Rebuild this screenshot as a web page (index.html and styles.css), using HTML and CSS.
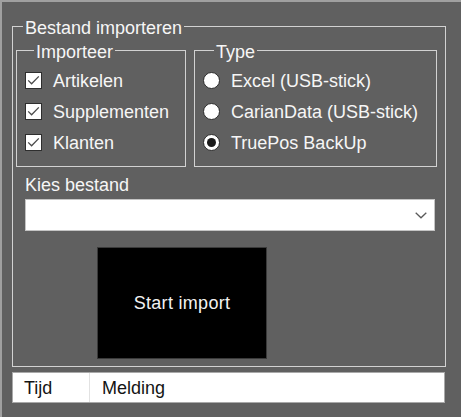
FILE: index.html
```html
<!DOCTYPE html>
<html lang="nl">
<head>
<meta charset="utf-8">
<title>Bestand importeren</title>
<link rel="stylesheet" href="styles.css">
</head>
<body>
<div class="window">
  <fieldset class="group outer">
    <legend class="legend-outer">Bestand importeren</legend>
    <div class="row-groups">
      <fieldset class="group importeer">
        <legend class="legend-importeer">Importeer</legend>
        <div class="opt"><span class="check"><svg viewBox="0 0 15 15" width="15" height="15"><path d="M2.2 7.4 L5.6 10.8 L12.8 3.4" fill="none" stroke="#4a4a4a" stroke-width="1.3"/></svg></span><span>Artikelen</span></div>
        <div class="opt"><span class="check"><svg viewBox="0 0 15 15" width="15" height="15"><path d="M2.2 7.4 L5.6 10.8 L12.8 3.4" fill="none" stroke="#4a4a4a" stroke-width="1.3"/></svg></span><span>Supplementen</span></div>
        <div class="opt"><span class="check"><svg viewBox="0 0 15 15" width="15" height="15"><path d="M2.2 7.4 L5.6 10.8 L12.8 3.4" fill="none" stroke="#4a4a4a" stroke-width="1.3"/></svg></span><span>Klanten</span></div>
      </fieldset>
      <fieldset class="group type">
        <legend class="legend-type">Type</legend>
        <div class="opt"><span class="radio"></span><span>Excel (USB-stick)</span></div>
        <div class="opt"><span class="radio"></span><span>CarianData (USB-stick)</span></div>
        <div class="opt"><span class="radio selected"><span class="dot"></span></span><span>TruePos BackUp</span></div>
      </fieldset>
    </div>
    <div class="field-label">Kies bestand</div>
    <div class="combo"><svg class="chev" viewBox="0 0 12 7" width="12" height="7"><path d="M0.7 0.8 L6 5.8 L11.3 0.8" fill="none" stroke="#5a5a5a" stroke-width="1.3"/></svg></div>
    <button class="start">Start import</button>
  </fieldset>
  <div class="listview">
    <div class="col tijd">Tijd</div>
    <div class="col melding">Melding</div>
  </div>
</div>
</body>
</html>
```
FILE: styles.css
```css
* { box-sizing: border-box; }
html, body { margin: 0; padding: 0; }
body {
  background: #606060;
  font-family: "Liberation Sans", Arial, sans-serif;
  font-size: 18px;
  color: #f6f6f6;
  overflow: hidden;
}
.window {
  width: 461px;
  height: 417px;
  border-top: 2px solid #a0a0a0;
  border-left: 2px solid #a0a0a0;
  padding: 12px 0 0 10px;
}
.group {
  margin: 0;
  padding: 0;
  border: 1px solid #d2d2d2;
  min-width: 0;
}
.group legend {
  padding: 4px 2px 0;
  line-height: 20px;
}
.outer {
  width: 434px;
  padding-bottom: 7px;
}
.legend-outer { margin-left: 10px; }
.legend-importeer { margin-left: 9px; }
.legend-type { margin-left: 11px; }
.row-groups {
  display: flex;
  gap: 8px;
  margin-left: 3px;
}
.importeer, .type {
  height: 129px;
  padding: 3px 0 0 8px;
}
.importeer { width: 170px; }
.type { width: 243px; }
.opt {
  display: flex;
  align-items: center;
  height: 31px;
  line-height: 20px;
}
.check {
  width: 17px;
  height: 17px;
  background: #fff;
  border: 1px solid #2e2e2e;
  margin-right: 11px;
  display: flex;
  align-items: center;
  justify-content: center;
  flex: none;
}
.check svg { display: block; width: 15px; height: 15px; }
.radio {
  width: 17px;
  height: 17px;
  border-radius: 50%;
  background: #fff;
  border: 1px solid #2b2b2b;
  margin-right: 11px;
  flex: none;
  display: flex;
  align-items: center;
  justify-content: center;
}
.radio .dot {
  width: 9px;
  height: 9px;
  border-radius: 50%;
  background: #1a1a1a;
}
.field-label {
  margin: 8px 0 0 12px;
  line-height: 20px;
}
.combo {
  margin: 4px 0 0 12px;
  width: 410px;
  height: 32px;
  background: #fff;
  border: 1px solid #c4c4c4;
  display: flex;
  align-items: center;
  justify-content: flex-end;
  padding-right: 7px;
}
.chev { display: block; }
.start {
  display: block;
  margin: 16px 0 0 84px;
  width: 170px;
  height: 112px;
  background: #000;
  border: 1px solid #3a3a3a;
  color: #f2f2f2;
  font-family: "Liberation Sans", Arial, sans-serif;
  font-size: 18px;
  letter-spacing: 0.3px;
  padding: 0;
}
.listview {
  margin-top: 5px;
  width: 433px;
  height: 31px;
  background: #fff;
  border: 1px solid #a9a9a9;
  display: flex;
  color: #141414;
}
.col {
  display: flex;
  align-items: center;
  line-height: 20px;
}
.tijd {
  width: 77px;
  padding-left: 11px;
  border-right: 1px solid #e2e2e2;
}
.melding { padding-left: 12px; }
```
